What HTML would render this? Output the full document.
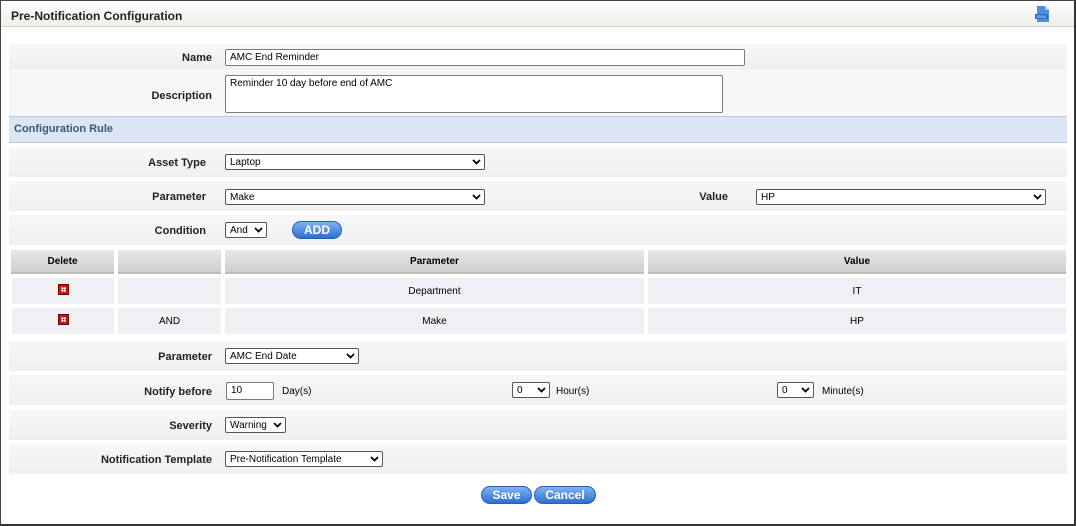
<!DOCTYPE html>
<html><head><style>
*{box-sizing:border-box}
body{margin:0;width:1076px;height:526px;background:#fff;font-family:"Liberation Sans",Arial,sans-serif;font-size:11px;color:#000;position:relative;overflow:hidden}
.frame{position:absolute;left:0;top:0;width:1076px;height:526px;border:1px solid #444;border-right:2px solid #333;border-bottom:2px solid #333}
.title{position:absolute;left:1px;top:1px;width:1073px;height:26px;background:linear-gradient(#fff,#eef0ea);border-bottom:1px solid #d0d4cc;font-weight:bold;font-size:12px;color:#222;padding:8px 0 0 10px}
.band{position:absolute;left:9px;width:1058px;background:linear-gradient(#f6f7f8,#eef0f2)}
.lbl{position:absolute;font-weight:bold;text-align:right;color:#222}
.inp{position:absolute;border:1px solid #7a7a7a;border-radius:2px;background:#fff;padding:2px 4px;font-size:10px}
.sel{position:absolute;border:1px solid #555;border-radius:2px;background:#fff;padding:0 4px;font-size:10px;display:flex;align-items:center}
.sel svg{position:absolute;right:3px;top:50%;margin-top:-3px}
.rule{position:absolute;left:9px;top:116px;width:1058px;height:27px;background:#dbe5f3;border-top:1px solid #b8c8de;border-bottom:1px solid #b8c8de;font-weight:bold;color:#3b5a7c;padding:6px 0 0 5px}
.th{position:absolute;top:250px;height:24px;background:linear-gradient(#e8e8e8,#cfcfcf);border-bottom:2px solid #bcbcbc;font-weight:bold;text-align:center;padding-top:6px;font-size:10px}
.td{position:absolute;height:26px;background:#eef0f3;text-align:center;padding-top:8px;font-size:10px}
.x{display:inline-block;width:11px;height:11px;background:#d01010;border:1px solid #700;position:relative;margin-top:-2px}
.x:after{content:"";position:absolute;left:2px;top:2px;width:5px;height:5px;background:radial-gradient(circle,#fff 1px,transparent 1.2px) 0 0/2.5px 2.5px}
.btn{position:absolute;height:18px;border-radius:9px;background:linear-gradient(#7fb2f0,#2f6fd0);border:1px solid #2a5fb0;color:#fff;font-weight:bold;font-size:12px;text-align:center;padding-top:1px}
</style></head><body>
<div class="frame"></div>
<div class="title">Pre-Notification Configuration</div>
<svg style="position:absolute;left:1034px;top:5px" width="18" height="18" viewBox="0 0 18 18"><path d="M3 1h8l4 4v12H3z" fill="#4a8fe0"/><path d="M11 1v4h4" fill="#a9cdf6"/><rect x="1" y="9" width="13" height="5" fill="#2c6cc4"/><text x="7" y="13" font-size="3.5" fill="#fff" text-anchor="middle" font-family="Liberation Sans">JSON</text></svg>

<div class="band" style="top:44px;height:26px"></div>
<div class="lbl" style="left:100px;width:112px;top:52px">Name</div>
<div class="inp" style="left:225px;top:49px;width:520px;height:17px">AMC End Reminder</div>
<div class="band" style="top:71px;height:45px;background:#f5f6f7"></div>
<div class="lbl" style="left:100px;width:112px;top:90px">Description</div>
<div class="inp" style="left:225px;top:75px;width:498px;height:38px">Reminder 10 day before end of AMC</div>

<div class="rule">Configuration Rule</div>

<div class="band" style="top:147px;height:30px"></div>
<div class="lbl" style="left:100px;width:106px;top:157px">Asset Type</div>
<div class="sel" style="left:225px;top:154px;width:260px;height:16px">Laptop<svg width="9" height="6"><path d="M1 1l3.5 3.5L8 1" stroke="#000" stroke-width="1.8" fill="none"/></svg></div>

<div class="band" style="top:181px;height:30px"></div>
<div class="lbl" style="left:100px;width:106px;top:191px">Parameter</div>
<div class="sel" style="left:225px;top:189px;width:260px;height:16px">Make<svg width="9" height="6"><path d="M1 1l3.5 3.5L8 1" stroke="#000" stroke-width="1.8" fill="none"/></svg></div>
<div class="lbl" style="left:650px;width:78px;top:191px">Value</div>
<div class="sel" style="left:756px;top:189px;width:290px;height:16px">HP<svg width="9" height="6"><path d="M1 1l3.5 3.5L8 1" stroke="#000" stroke-width="1.8" fill="none"/></svg></div>

<div class="band" style="top:215px;height:30px"></div>
<div class="lbl" style="left:100px;width:106px;top:225px">Condition</div>
<div class="sel" style="left:225px;top:222px;width:42px;height:16px">And<svg width="9" height="6"><path d="M1 1l3.5 3.5L8 1" stroke="#000" stroke-width="1.8" fill="none"/></svg></div>
<div class="btn" style="left:292px;top:221px;width:50px;height:18px">ADD</div>

<div class="th" style="left:11px;width:103px">Delete</div>
<div class="th" style="left:118px;width:103px"></div>
<div class="th" style="left:225px;width:419px">Parameter</div>
<div class="th" style="left:648px;width:418px">Value</div>

<div class="td" style="left:12px;top:278px;width:102px"><span class="x"></span></div>
<div class="td" style="left:118px;top:278px;width:103px"></div>
<div class="td" style="left:225px;top:278px;width:419px">Department</div>
<div class="td" style="left:648px;top:278px;width:418px">IT</div>
<div class="td" style="left:12px;top:308px;width:102px"><span class="x"></span></div>
<div class="td" style="left:118px;top:308px;width:103px">AND</div>
<div class="td" style="left:225px;top:308px;width:419px">Make</div>
<div class="td" style="left:648px;top:308px;width:418px">HP</div>

<div class="band" style="top:341px;height:30px"></div>
<div class="lbl" style="left:100px;width:112px;top:351px">Parameter</div>
<div class="sel" style="left:225px;top:348px;width:134px;height:16px">AMC End Date<svg width="9" height="6"><path d="M1 1l3.5 3.5L8 1" stroke="#000" stroke-width="1.8" fill="none"/></svg></div>

<div class="band" style="top:375px;height:30px"></div>
<div class="lbl" style="left:100px;width:112px;top:386px">Notify before</div>
<div class="inp" style="left:226px;top:382px;width:48px;height:18px">10</div>
<div style="position:absolute;left:282px;top:386px;font-size:10px">Day(s)</div>
<div class="sel" style="left:512px;top:382px;width:38px;height:16px">0<svg width="9" height="6"><path d="M1 1l3.5 3.5L8 1" stroke="#000" stroke-width="1.8" fill="none"/></svg></div>
<div style="position:absolute;left:556px;top:386px;font-size:10px">Hour(s)</div>
<div class="sel" style="left:777px;top:382px;width:37px;height:16px">0<svg width="9" height="6"><path d="M1 1l3.5 3.5L8 1" stroke="#000" stroke-width="1.8" fill="none"/></svg></div>
<div style="position:absolute;left:822px;top:386px;font-size:10px">Minute(s)</div>

<div class="band" style="top:410px;height:30px"></div>
<div class="lbl" style="left:100px;width:112px;top:420px">Severity</div>
<div class="sel" style="left:225px;top:417px;width:61px;height:16px">Warning<svg width="9" height="6"><path d="M1 1l3.5 3.5L8 1" stroke="#000" stroke-width="1.8" fill="none"/></svg></div>

<div class="band" style="top:444px;height:30px"></div>
<div class="lbl" style="left:60px;width:152px;top:454px">Notification Template</div>
<div class="sel" style="left:225px;top:451px;width:158px;height:16px">Pre-Notification Template<svg width="9" height="6"><path d="M1 1l3.5 3.5L8 1" stroke="#000" stroke-width="1.8" fill="none"/></svg></div>

<div class="btn" style="left:481px;top:486px;width:51px">Save</div>
<div class="btn" style="left:534px;top:486px;width:62px">Cancel</div>
</body></html>
